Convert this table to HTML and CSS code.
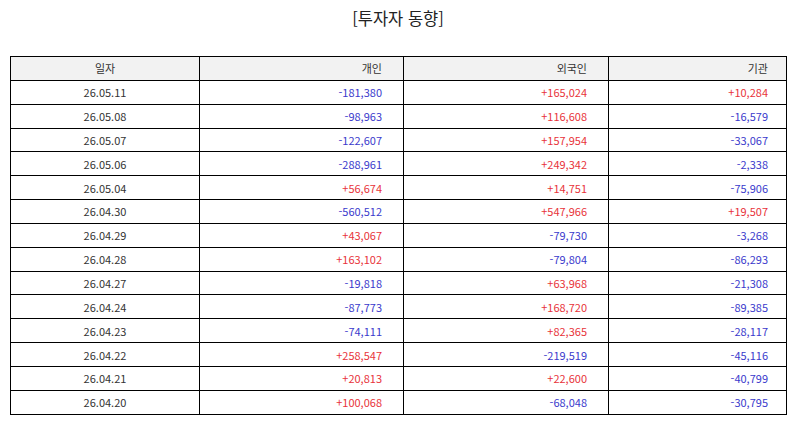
FILE: index.html
```html
<!DOCTYPE html>
<html lang="ko">
<head>
<meta charset="utf-8">
<link rel="stylesheet" href="styles.css">
</head>
<body>
<div class="page">
  <h1 class="title">[투자자 동향]</h1>
  <table class="grid">
    <colgroup>
      <col class="c1"><col class="c2"><col class="c3"><col class="c4">
    </colgroup>
    <thead>
      <tr><th class="center">일자</th><th>개인</th><th>외국인</th><th>기관</th></tr>
    </thead>
    <tbody>
      <tr><td class="center">26.05.11</td><td class="dn">-181,380</td><td class="up">+165,024</td><td class="up">+10,284</td></tr>
      <tr><td class="center">26.05.08</td><td class="dn">-98,963</td><td class="up">+116,608</td><td class="dn">-16,579</td></tr>
      <tr><td class="center">26.05.07</td><td class="dn">-122,607</td><td class="up">+157,954</td><td class="dn">-33,067</td></tr>
      <tr><td class="center">26.05.06</td><td class="dn">-288,961</td><td class="up">+249,342</td><td class="dn">-2,338</td></tr>
      <tr><td class="center">26.05.04</td><td class="up">+56,674</td><td class="up">+14,751</td><td class="dn">-75,906</td></tr>
      <tr><td class="center">26.04.30</td><td class="dn">-560,512</td><td class="up">+547,966</td><td class="up">+19,507</td></tr>
      <tr><td class="center">26.04.29</td><td class="up">+43,067</td><td class="dn">-79,730</td><td class="dn">-3,268</td></tr>
      <tr><td class="center">26.04.28</td><td class="up">+163,102</td><td class="dn">-79,804</td><td class="dn">-86,293</td></tr>
      <tr><td class="center">26.04.27</td><td class="dn">-19,818</td><td class="up">+63,968</td><td class="dn">-21,308</td></tr>
      <tr><td class="center">26.04.24</td><td class="dn">-87,773</td><td class="up">+168,720</td><td class="dn">-89,385</td></tr>
      <tr><td class="center">26.04.23</td><td class="dn">-74,111</td><td class="up">+82,365</td><td class="dn">-28,117</td></tr>
      <tr><td class="center">26.04.22</td><td class="up">+258,547</td><td class="dn">-219,519</td><td class="dn">-45,116</td></tr>
      <tr><td class="center">26.04.21</td><td class="up">+20,813</td><td class="up">+22,600</td><td class="dn">-40,799</td></tr>
      <tr><td class="center">26.04.20</td><td class="up">+100,068</td><td class="dn">-68,048</td><td class="dn">-30,795</td></tr>
    </tbody>
  </table>
</div>
</body>
</html>
```

FILE: styles.css
```css
html, body {
  margin: 0;
  padding: 0;
  background: #ffffff;
}

.page {
  font-family: "Noto Sans CJK KR", "Noto Sans", sans-serif;
  color: #333333;
  padding: 0 8px 0 10px;
}

.title {
  margin: 0;
  padding-top: 6px;
  height: 50px;
  box-sizing: border-box;
  text-align: center;
  font-size: 16.5px;
  font-weight: normal;
  line-height: 24px;
  color: #222222;
}

.grid {
  border-collapse: collapse;
  width: 776px;
  table-layout: fixed;
  margin-top: 6px;
  font-size: 11px;
}

.c1 { width: 189px; }
.c2 { width: 204px; }
.c3 { width: 205px; }
.c4 { width: 178px; }

.grid th,
.grid td {
  border: 1px solid #000000;
  height: 23.85px;
  padding: 0 21px 0 0;
  text-align: right;
  font-weight: normal;
  line-height: 14px;
  box-sizing: border-box;
}

.grid th {
  background: #f2f2f2;
  color: #333333;
}

.grid .center {
  text-align: center;
  padding: 0;
}

.grid td:last-child,
.grid th:last-child {
  padding-right: 18px;
}

.up { color: #e8333a; }
.dn { color: #3a3acc; }
```
